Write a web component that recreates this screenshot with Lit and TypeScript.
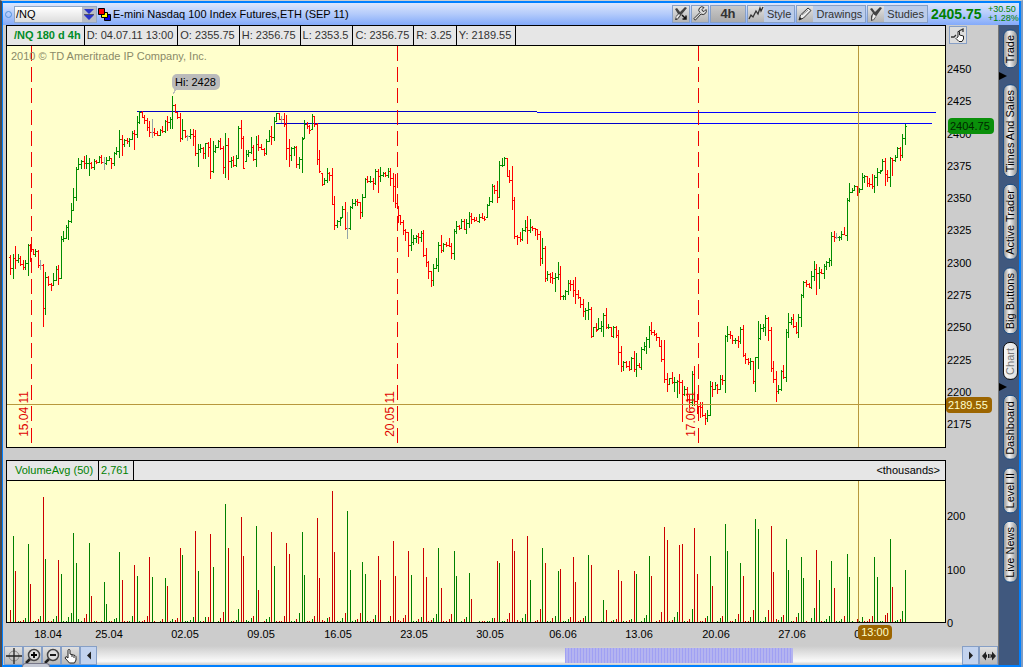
import { LitElement, html, css, svg } from "lit";
import { customElement, state } from "lit/decorators.js";

/* Plot geometry, in chart units. */
const PLOT = { left: 7, top: 46, width: 938, height: 401 };
const VOLUME = { height: 141 };
const FIRST_BAR = 10;
const BAR_STEP = 2.535;
const UNCHANGED = new Set([12, 37, 56, 70, 107, 133, 326]);

/* One four-hour bar per entry: high, low, close. The open is the close before it. */
const BARS = `
255,275,268 254,279,258 246,269,260 254,263,258 256,266,264 260,270,267 260,270,263 244,276,245 244,262,249 249,255,254
249,257,251 250,268,265 260,270,265 264,327,308 272,315,277 276,286,284 283,291,285 273,286,280 266,281,269 265,285,278
236,279,239 231,242,238 225,239,227 220,240,221 203,223,210 188,211,197 167,201,169 158,170,164 160,169,161 156,169,163
155,169,163 158,176,163 162,169,167 159,170,161 160,164,162 156,163,157 155,164,162 157,170,163 157,165,160 156,161,158
158,169,163 152,166,153 147,155,151 130,158,139 135,156,144 139,147,140 138,144,141 138,147,139 131,140,133 130,150,134
116,138,122 111,124,112 111,118,117 115,124,120 118,131,127 121,137,132 119,138,132 128,136,133 131,136,135 129,136,130
126,133,131 120,133,121 116,131,122 117,129,119 96,129,105 104,113,112 112,119,117 113,142,138 119,140,130 130,138,136
135,141,136 129,139,134 129,146,136 130,156,153 144,167,149 144,153,148 147,159,153 143,159,143 142,157,147 138,179,171
141,173,151 145,153,147 140,148,141 138,150,148 146,174,167 133,178,145 138,180,161 157,168,160 156,167,165 155,167,158
126,159,128 120,149,138 136,169,168 150,162,154 150,157,152 137,154,147 145,161,159 136,167,144 135,151,147 144,150,149
148,156,153 139,155,141 130,142,136 126,145,137 117,141,121 113,122,113 113,120,119 116,123,119 113,127,124 115,160,148
139,167,155 147,161,148 146,156,147 146,168,164 157,169,159 137,173,139 120,139,124 122,129,126 125,134,130 114,130,116
116,127,124 123,165,159 150,173,171 173,186,184 178,185,180 168,183,173 172,181,175 168,205,204 196,230,225 220,228,221
217,226,218 206,218,209 202,230,228 212,239,228 206,230,207 199,209,203 199,206,201 199,206,202 202,219,212 194,217,197
178,198,179 176,183,181 176,183,181 178,190,183 169,185,171 169,193,176 167,182,175 172,177,173 172,177,175 168,178,171
168,186,178 173,202,186 174,208,203 206,223,215 215,225,222 220,235,230 229,241,232 232,257,245 229,251,242 235,245,238
235,243,236 233,244,237 231,242,233 230,257,255 248,267,262 261,279,271 271,287,280 264,286,268 258,269,265 242,272,245
235,253,250 243,252,244 242,247,245 238,247,246 243,259,253 229,260,231 221,234,226 225,230,228 219,229,221 219,230,229
219,234,223 212,228,216 213,224,219 217,222,220 217,221,221 214,223,217 213,219,218 216,221,219 204,218,205 197,206,201
184,203,186 185,194,190 181,203,197 161,198,165 158,167,165 157,166,158 158,177,176 170,183,180 166,210,200 197,239,236
235,245,237 232,242,239 228,241,230 220,232,227 216,244,230 219,233,227 226,231,228 228,236,229 229,240,234 231,266,258
238,264,248 246,282,278 271,281,274 273,283,277 272,284,278 273,292,277 262,280,274 266,300,296 295,300,296 290,300,291
280,295,283 280,291,284 280,297,290 277,304,294 290,299,297 297,308,304 299,317,311 308,320,310 302,320,309 307,338,336
327,337,327 323,332,330 318,330,328 321,332,326 313,337,315 308,329,327 324,329,327 327,337,336 326,338,327 326,338,335
330,365,352 346,372,366 361,371,362 361,368,366 361,371,369 357,370,358 351,372,369 353,377,365 363,368,367 347,370,349
342,351,346 337,354,339 326,348,330 322,335,332 330,336,334 333,341,337 337,347,346 340,362,359 340,383,379 373,392,384
378,385,378 372,384,382 377,392,382 380,398,381 374,394,382 380,422,394 386,396,389 387,401,399 395,408,402 371,406,374
366,406,401 394,414,406 402,418,407 402,417,415 413,425,418 410,422,415 381,416,386 382,397,389 382,390,385 384,394,389
375,390,379 375,385,380 335,393,336 326,342,334 331,339,335 335,344,340 338,344,340 336,348,341 327,344,329 325,357,355
353,364,359 358,365,362 358,370,361 361,384,381 357,392,357 321,369,338 324,340,328 324,332,327 315,336,318 317,341,330
327,372,368 361,383,379 371,402,391 385,394,389 370,391,371 365,379,377 329,382,332 313,338,322 317,325,319 314,328,326
322,334,332 314,338,317 294,327,295 281,298,282 280,287,284 283,288,287 271,289,276 261,281,269 264,295,273 267,289,272
269,274,273 264,279,266 261,270,262 258,267,260 232,266,236 231,242,237 233,239,237 236,241,237 231,240,234 227,235,235
198,241,200 183,202,192 188,193,190 185,191,186 186,196,189 188,193,189 173,190,177 175,183,176 176,187,183 178,187,184
174,189,186 175,193,177 168,186,172 170,174,171 159,171,161 158,186,174 170,182,177 157,187,158 158,176,160 155,162,157
147,158,148 147,161,155 134,158,138 124,145,126`
  .trim()
  .split(/\s+/)
  .map((bar) => bar.split(",").map(Number));

/* Traded volume per bar; a falling bar is negative. */
const VOLUMES = [
  -12, 86, -51, 1, -1, -2, 4,
  78, -38, -1, 1, -3, 6, -125, 63, -1, -1, 3, 6, -62, 48, 1, 1, 5, 9,
  89, 59, 3, 1, -4, -8, 79, -26, 1, -1, 0, -1, 40, 18, 1, -1, 3, 4,
  70, -42, -1, -1, 1, 6, -57, 46, 1, -1, -2, -6, -65, 45, -1, 0, 1, -3,
  44, -36, 1, 3, -2, -4, -74, 67, 1, 1, 2, 5, -91, 51, 1, -1, 5, -5,
  -88, 55, 0, 1, -4, -10, 118, -74, 1, -1, 2, 13, -105, -66, 2, 1, 4, -6,
  96, -32, 0, -1, 3, 5, -90, 56, -1, -1, -1, -6, -79, -68, 1, 1, -3, 9,
  90, 47, -1, -1, 3, -6, -104, -44, -2, -1, 4, -5, -131, -70, 1, 1, 4, -9,
  111, 52, 1, 2, -3, -9, 60, 48, -1, 1, -3, 7, -66, -42, 0, 0, 1, -6,
  -81, -46, -2, -1, -4, -7, -71, 47, 1, 1, -3, 5, -74, -45, -1, -2, 4, 8,
  74, -34, -1, -1, -3, -8, 71, 46, 0, 1, -3, 5,
  49, -23, 0, 0, 1, -1, -1, 1, 1, 4, -4,
  -61, 59, 1, 1, -3, -9, -83, -71, -2, -1, 4, 8, -86, 42, 0, -1, -2, -13,
  74, -59, 1, 1, -4, 6, 51, -53, 1, 1, 3, -5, -65, -40, -1, -2, -4, 6,
  67, -57, 0, 0, 0, 1, 22, -12, 0, -1, 2, -3, -52, -41, 1, -1, -2, 3,
  -51, 48, 0, 1, 4, 7, 66, -46, 0, -1, -2, -10, -95, -82, 1, -2, 5, 10,
  -77, -78, 1, -1, -3, 13, -94, -48, -1, -1, -4, 6, 66, -36, 0, 1, 4, -6,
  98, 71, -1, -1, 3, -8, 59, -46, -1, -1, 5, -12, 103, 93, 1, 1, 5, -12,
  -96, -50, -3, 2, 5, -7, 83, 52, 1, -1, -5, 9, 65, 44, -1, 0, 4, 14,
  -72, 42, -1, 1, 3, 6, 61, -34, 1, 1, 3, -6,
  68, 45, 1, 0, -3, 1, 5, -1, -1, -3, -6,
  65, 45, 1, 1, -7, -9, 83, -35, 1, 2, -3, 11, 52,
];

const barX = (i: number) => FIRST_BAR + Math.round(i * BAR_STEP);
const topOf = (y: number) => `top:${((y - PLOT.top) / PLOT.height) * 100}%`;
const leftOf = (x: number) => `left:${((x - PLOT.left) / PLOT.width) * 100}%`;

function pricePaths() {
  const paths = { up: "", down: "", flat: "" };
  BARS.forEach(([high, low, close], i) => {
    const open = i ? BARS[i - 1][2] : 257;
    const x = barX(i);
    const kind = UNCHANGED.has(i) ? "flat" : close <= open ? "up" : "down";
    const start = Math.min(Math.max(open, high), low - 1);
    paths[kind] += `M${x} ${high}h1V${low}h-1zM${x - 1} ${start}h1v1h-1zM${x + 1} ${close}h1v1h-1z`;
  });
  return paths;
}

function volumePaths() {
  const paths = { up: "", down: "" };
  VOLUMES.forEach((v, i) => {
    if (v) paths[v > 0 ? "up" : "down"] += `M${barX(i)} ${VOLUME.height}h1v${-Math.abs(v)}h-1z`;
  });
  return paths;
}

const PRICE = pricePaths();
const VOL = volumePaths();

const PRICE_TICKS = [2450, 2425, 2400, 2375, 2350, 2325, 2300, 2275, 2250, 2225, 2200, 2175];
const DATE_TICKS: [string, number][] = [
  ["18.04", 48], ["25.04", 109], ["02.05", 185], ["09.05", 261], ["16.05", 338], ["23.05", 414],
  ["30.05", 490], ["06.06", 563], ["13.06", 639], ["20.06", 716], ["27.06", 792], ["04.07", 868],
];
const EXPIRIES: [string, number][] = [["15.04 11", 31], ["20.05 11", 397], ["17.06 11", 698]];
const QUOTE = ["D: 04.07.11 13:00", "O: 2355.75", "H: 2356.75", "L: 2353.5", "C: 2356.75", "R: 3.25", "Y: 2189.55"];
const GADGETS = [
  ["Trade"],
  ["Times And Sales", "Active Trader", "Big Buttons", "Chart"],
  ["Dashboard", "Level II", "Live News"],
];

const icon = (body: unknown, size = 16) =>
  html`<svg class="icon" width=${size} height=${size} viewBox="0 0 16 16" aria-hidden="true">${body}</svg>`;

const ICONS = {
  drawTool: svg`<path d="M2 3l2-1 3 4 5-5 2 1-5 6-3 4-2 2H2l1-4 2-2z" fill="#444"/><path d="M3 11l3-3 1 1-3 4z" fill="#eee"/><path d="M9 9l4 4m0-3.500V13H9.500" stroke="#111" stroke-width="1.500" fill="none"/>`,
  brush: svg`<path d="M2 3l2-1 3 4 5-5 2 1-5 7-3 5-3 1v-5l2-3z" fill="#444"/><path d="M5 8l3 2-3 4-1-1z" fill="#eee"/>`,
  wrench: svg`<path d="M3 13.500l6-6a3 3 0 0 1 4-5l-2 2 .5 1.500 1.500.5 2-2a3.500 3.500 0 0 1-5 4.500L4.500 15a1.500 1.500 0 0 1-1.500-1.500z" transform="translate(-1 -1)" fill="#ddd" stroke="#333"/>`,
  trend: svg`<path d="M1 13l2-4 2 2 3-6 2 3 2-6 1 3 2-4" fill="none" stroke="#333" stroke-width="1.300"/>`,
  pencil: svg`<path d="M2 14l1.500-5L11 2l3 2.500L6.500 12z" fill="#eee" stroke="#333"/><path d="M2 14l1-3 2 2z" fill="#222"/><path d="M5 9l6-5" stroke="#888"/>`,
  pointer: svg`<path d="M1 10h3l2-2M9 4l4-2v3" stroke="#333" stroke-width="1.300" fill="none"/><path d="M8 10V4.500h1.500V8l4 1v3l-1.500 2.500H9L6 11.500l1-1z" fill="#fff" stroke="#222"/>`,
  cross: svg`<circle cx="8" cy="8" r="5" fill="none" stroke="#888"/><path d="M8 0v16M0 8h16" stroke="#222" stroke-width="1.300"/>`,
  zoomIn: svg`<path d="M5 11l-4 4" stroke="#222" stroke-width="2.500"/><circle cx="9" cy="7" r="5.500" fill="#ddd" stroke="#444" stroke-width="1.500"/><path d="M9 4v6M6 7h6" stroke="#000" stroke-width="1.800"/>`,
  zoomOut: svg`<path d="M5 11l-4 4" stroke="#222" stroke-width="2.500"/><circle cx="9" cy="7" r="5.500" fill="#ddd" stroke="#444" stroke-width="1.500"/><path d="M6 7h6" stroke="#000" stroke-width="1.800"/>`,
  hand: svg`<path d="M5 10V2.500a1 1 0 0 1 2 0V6l5 1.500a2 2 0 0 1 1 2V12l-1.500 3h-5L2 10l1-1.500z" fill="#fff" stroke="#222"/><path d="M9 7v2M11 8v2" stroke="#222"/>`,
  previous: svg`<path d="M10 3.500v8L6 7.500z" fill="#222"/>`,
  next: svg`<path d="M6 3.500v8l4-4z" fill="#222"/>`,
  fit: svg`<path d="M1 8l4-4.500v3h1v3H5v3zM15 8l-4-4.500v3h-1v3h1v3z" fill="#222"/><path d="M7.500 6v4M9 6v4" stroke="#222"/>`,
};

@customElement("app-root")
export class AppRoot extends LitElement {
  @state() private active = "Chart";
  @state() private symbol = "/NQ";

  static styles = css`
    :host {
      display: block;
      font: 11px/14px "Liberation Sans", Arial, sans-serif;
      color: #000;
    }
    * { box-sizing: border-box; }
    button, input { font: inherit; color: inherit; margin: 0; padding: 0; border-radius: 0; }
    svg { display: block; }
    .icon { flex: none; }
    .frame {
      height: 100vh;
      min-height: 480px;
      border: solid #ccc;
      border-width: 1px 2px 0 2px;
      border-left-color: #4a4a50;
      border-right-color: #7d9cc4;
      position: relative;
      overflow: hidden;
    }
    .window {
      height: 100%;
      border: 2px solid #0080ff;
      border-left-width: 1px;
      display: flex;
      flex-direction: column;
      background: #ccc;
    }
    .title {
      flex: none;
      height: 22px;
      display: flex;
      align-items: center;
      background: linear-gradient(#dce6fc, #b4cbfb 50%, #83aafa);
      white-space: nowrap;
    }
    .dot { width: 7px; height: 7px; margin: 0 2px; border: 1px solid #4f93dd; border-radius: 50%; }
    .symbol {
      display: flex;
      width: 83px;
      height: 17px;
      border: 1px solid #93a7c4;
      background: linear-gradient(#fff, #ddd);
    }
    .symbol input { flex: 1; min-width: 0; border: 0; background: none; outline: 0; padding-left: 1px; }
    .symbol button { width: 14px; border: 0; background: #b9bdc6; }
    .squares { margin: 0 2px 0 1px; }
    .name { flex: 1; overflow: hidden; }
    .tools { display: flex; gap: 1px; }
    .tool {
      height: 18px;
      display: flex;
      align-items: center;
      gap: 3px;
      border: 1px solid #869fc6;
      background: #bccce8;
      color: #333;
    }
    .tool .icon { background: linear-gradient(#e4e4e4, #b4b4b4); }
    .tool.wide { padding-right: 3px; }
    .tool.period {
      width: 36px;
      justify-content: center;
      font-size: 13px;
      font-weight: bold;
      background: linear-gradient(#c9c9c9, #aaa);
    }
    .last { width: 60px; padding-left: 3px; font-size: 14px; font-weight: bold; color: #008000; }
    .change { width: 31px; font-size: 9px; line-height: 9px; color: #008000; }
    .body { flex: 1; min-height: 0; display: flex; }
    .chart { flex: 1; min-width: 0; display: flex; flex-direction: column; }
    .row { display: flex; min-height: 0; padding-left: 3px; }
    .row.price { flex: 423 1 0; }
    .row.volume { flex: 163 1 0; margin-top: 12px; }
    .panel { flex: 1; min-width: 0; display: flex; flex-direction: column; border: 1px solid #000; }
    .head {
      flex: none;
      height: 20px;
      display: flex;
      background: #e6e6e6;
      border-bottom: 1px solid #000;
      color: #333;
      line-height: 19px;
      white-space: nowrap;
      overflow: hidden;
    }
    .head span { padding: 0 4px 0 2px; border-right: 1px solid #000; }
    .head .series { padding: 0 3px 0 7px; color: #008c28; font-weight: bold; }
    .head .study { padding: 0 5px 0 8px; color: #008000; }
    .head .value { color: #008000; }
    .head .unit { margin-left: auto; border: 0; padding-right: 5px; color: #000; }
    .plot { flex: 1; min-height: 0; position: relative; background: #ffffcc; }
    .plot > svg { position: absolute; inset: 0; width: 100%; height: 100%; shape-rendering: crispEdges; }
    .up { fill: #008c00; }
    .down { fill: #f00; }
    .flat { fill: #94a4a8; }
    .volume .up { fill: #008000; }
    .volume .down { fill: #c00; }
    .line { fill: none; stroke-width: 1; vector-effect: non-scaling-stroke; }
    .expiry { stroke: #f00000; stroke-dasharray: 15 6.2; }
    .level { stroke: #0000c8; }
    .level.bright { stroke: #00f; }
    .cursor { stroke: #b8983c; }
    .copyright { position: absolute; left: 4px; top: 3px; color: #8a8a68; white-space: nowrap; }
    .expiry-label {
      position: absolute;
      bottom: 10px;
      margin-left: -14px;
      writing-mode: vertical-rl;
      transform: rotate(180deg);
      color: #e00000;
      font-size: 12px;
      line-height: 14px;
    }
    .callout {
      position: absolute;
      padding: 1px 4px 0 3px;
      height: 16px;
      border-radius: 5px;
      background: #bbb;
      white-space: nowrap;
    }
    .axis { flex: none; width: 52px; position: relative; display: flex; flex-direction: column; }
    .axis-top { flex: none; height: 21px; padding: 1px 3px; }
    .axis-top button {
      display: flex;
      width: 18px;
      height: 18px;
      border: 1px solid #869fc6;
      background: #ddd;
    }
    .scale { flex: 1; position: relative; }
    .scale span { position: absolute; left: 1px; line-height: 14px; margin-top: -7px; }
    .scale .tag { left: 0; height: 16px; line-height: 16px; margin-top: -8px; padding: 0 4px 0 2px; border-radius: 4px; }
    .tag { background: #9c6500; color: #ffffcc; }
    .scale .tag.quote { left: 2px; background: #0a8f0a; color: #002800; padding: 0 4px 0 2px; }
    .row.dates { flex: none; height: 23px; padding-right: 52px; }
    .date-scale { flex: 1; margin: 0 1px; position: relative; }
    .date-scale span { position: absolute; top: 4px; width: 40px; margin-left: -20px; text-align: center; }
    .date-scale .tag { top: 2px; width: 34px; margin-left: 0; height: 15px; line-height: 15px; border-radius: 4px; }
    .foot { flex: none; height: 19px; display: flex; padding-left: 1px; }
    .foot button {
      width: 19px;
      display: flex;
      align-items: center;
      justify-content: center;
      border: 1px solid #869fc6;
      background: linear-gradient(#e0e0e0, #b8b8b8);
    }
    .foot .arrow { width: 17px; background: #c3d3ee; }
    .track { flex: 1; background: linear-gradient(#ccc, #fafafa 80%, #ccc); padding: 2px 0; display: flex; }
    .before { flex: 467; }
    .thumb { flex: 227; background: repeating-linear-gradient(90deg, #a0a0f4 0 1px, #b4b4f0 1px 3px); }
    .after { flex: 169; }
    .gadgets { flex: none; width: 21px; background: #40587e; border-left: 1px solid #777; padding-top: 4px; }
    .gadget {
      display: block;
      width: 15px;
      margin: 0 0 7px 4px;
      padding: 4px 0 5px;
      border: 1px solid #1d4f86;
      border-radius: 7px;
      background: linear-gradient(90deg, #909090, #f4f4f4 60%, #999);
      writing-mode: vertical-rl;
      transform: rotate(180deg);
      line-height: 13px;
      white-space: nowrap;
      text-align: center;
    }
    .gadget.on { background: linear-gradient(90deg, #ddd, #f8f8f8); color: #777; border-color: #111; }
    .marker { width: 0; border: 4px solid transparent; border-left: 8px solid #000; border-right: 0; margin: -3px 0 4px; }
    .drawer {
      position: absolute;
      left: 20px;
      bottom: 0;
      width: 28px;
      height: 4px;
      border: 1px solid #778;
      border-bottom: 0;
      border-radius: 5px 5px 0 0;
      background: #c4c8d4;
    }
  `;

  private tool(label: string, glyph: unknown) {
    return html`<button class="tool wide">${icon(glyph)}${label}</button>`;
  }

  private header() {
    return html`
      <header class="title">
        <i class="dot"></i>
        <div class="symbol">
          <input
            aria-label="Symbol"
            .value=${this.symbol}
            @change=${(e: Event) => (this.symbol = (e.target as HTMLInputElement).value)}
          />
          <button aria-label="Recent symbols">
            <svg width="14" height="15" viewBox="0 0 14 15">
              <path d="M2 2h10L7 7zM2 8h10l-5 5z" fill="#2a35c8" />
              <path d="M2 7.500h10" stroke="#556" />
            </svg>
          </button>
        </div>
        <svg class="squares" width="13" height="13" viewBox="0 0 13 13" stroke="#000">
          <path d="M6.500 6.500h6v6h-6z" fill="#0000e8" />
          <path d="M3.500 4.500h6v5h-6z" fill="#ff0" />
          <path d="M.5.5h6v6h-6z" fill="#f00" />
        </svg>
        <span class="name">E-mini Nasdaq 100 Index Futures,ETH (SEP 11)</span>
        <div class="tools">
          <button class="tool" aria-label="Draw">${icon(ICONS.drawTool)}</button>
          <button class="tool" aria-label="Settings">${icon(ICONS.wrench)}</button>
          <button class="tool period">4h</button>
          ${this.tool("Style", ICONS.trend)} ${this.tool("Drawings", ICONS.pencil)}
          ${this.tool("Studies", ICONS.brush)}
        </div>
        <strong class="last">2405.75</strong>
        <div class="change">+30.50<br />+1.28%</div>
      </header>
    `;
  }

  private pricePanel() {
    return html`
      <section class="row price">
        <div class="panel">
          <div class="head">
            <span class="series">/NQ 180 d 4h</span>
            ${QUOTE.map((q) => html`<span>${q}</span>`)}
          </div>
          <div class="plot">
            <svg viewBox="7 46 938 401" preserveAspectRatio="none" role="img" aria-label="Price">
              <path class="line level" d="M137 111.500H537M276 123.500H680" />
              <path class="line level bright" d="M537 112.500H936M680 123.500H932" />
              ${EXPIRIES.map(([, x]) => svg`<path class="line expiry" d="M${x + 0.5} 46V447" />`)}
              <path class="flat" d=${PRICE.flat} />
              <path class="up" d=${PRICE.up} />
              <path class="down" d=${PRICE.down} />
              <path class="line cursor" d="M858.500 46V447M7 404.500H945" />
              <path d="M177 89l-4 6 1-6z" fill="#bbb" />
            </svg>
            <span class="copyright">2010 © TD Ameritrade IP Company, Inc.</span>
            ${EXPIRIES.map(([text, x]) => html`<span class="expiry-label" style=${leftOf(x)}>${text}</span>`)}
            <span class="callout" style="${leftOf(172)};${topOf(74)}">Hi: 2428</span>
          </div>
        </div>
        <div class="axis">
          <div class="axis-top"><button aria-label="Scale">${icon(ICONS.pointer)}</button></div>
          <div class="scale">
            ${PRICE_TICKS.map((p, i) => html`<span style=${topOf(69 + i * 32.2)}>${p}</span>`)}
            <span class="tag quote" style=${topOf(126)}>2404.75</span>
            <span class="tag" style=${topOf(404)}>2189.55</span>
          </div>
        </div>
      </section>
    `;
  }

  private volumePanel() {
    return html`
      <section class="row volume">
        <div class="panel">
          <div class="head">
            <span class="study">VolumeAvg (50)</span><span class="value">2,761</span>
            <span class="unit">&lt;thousands&gt;</span>
          </div>
          <div class="plot">
            <svg viewBox="7 0 938 141" preserveAspectRatio="none" role="img" aria-label="Volume">
              <path class="up" d=${VOL.up} />
              <path class="down" d=${VOL.down} />
              <path class="line cursor" d="M858.500 0V141" />
            </svg>
          </div>
        </div>
        <div class="axis">
          <div class="axis-top"></div>
          <div class="scale">
            ${[200, 100, 0].map(
              (v) => html`<span style="top:${((141 - v * 0.53) / VOLUME.height) * 100}%">${v}</span>`
            )}
          </div>
        </div>
      </section>
      <div class="row dates">
        <div class="date-scale">
          ${DATE_TICKS.map(([text, x]) => html`<span style=${leftOf(x)}>${text}</span>`)}
          <span class="tag" style=${leftOf(858)}>13:00</span>
        </div>
      </div>
    `;
  }

  private footer() {
    return html`
      <footer class="foot">
        <button aria-label="Crosshair">${icon(ICONS.cross)}</button>
        <button aria-label="Zoom in">${icon(ICONS.zoomIn)}</button>
        <button aria-label="Zoom out">${icon(ICONS.zoomOut)}</button>
        <button aria-label="Pan">${icon(ICONS.hand)}</button>
        <button class="arrow" aria-label="Scroll left">${icon(ICONS.previous)}</button>
        <div class="track"><i class="before"></i><i class="thumb"></i><i class="after"></i></div>
        <button class="arrow" aria-label="Scroll right">${icon(ICONS.next)}</button>
        <button aria-label="Fit all">${icon(ICONS.fit)}</button>
      </footer>
    `;
  }

  private gadgets() {
    return html`
      <nav class="gadgets">
        ${GADGETS.map(
          (group, i) => html`
            ${i ? html`<div class="marker"></div>` : ""}
            ${group.map(
              (name) => html`<button
                class="gadget ${name === this.active ? "on" : ""}"
                @click=${() => (this.active = name)}
              >${name}</button>`
            )}
          `
        )}
      </nav>
    `;
  }

  render() {
    return html`
      <div class="frame">
        <div class="window">
          ${this.header()}
          <main class="body">
            <div class="chart">${this.pricePanel()} ${this.volumePanel()} ${this.footer()}</div>
            ${this.gadgets()}
          </main>
        </div>
        <i class="drawer"></i>
      </div>
    `;
  }
}
